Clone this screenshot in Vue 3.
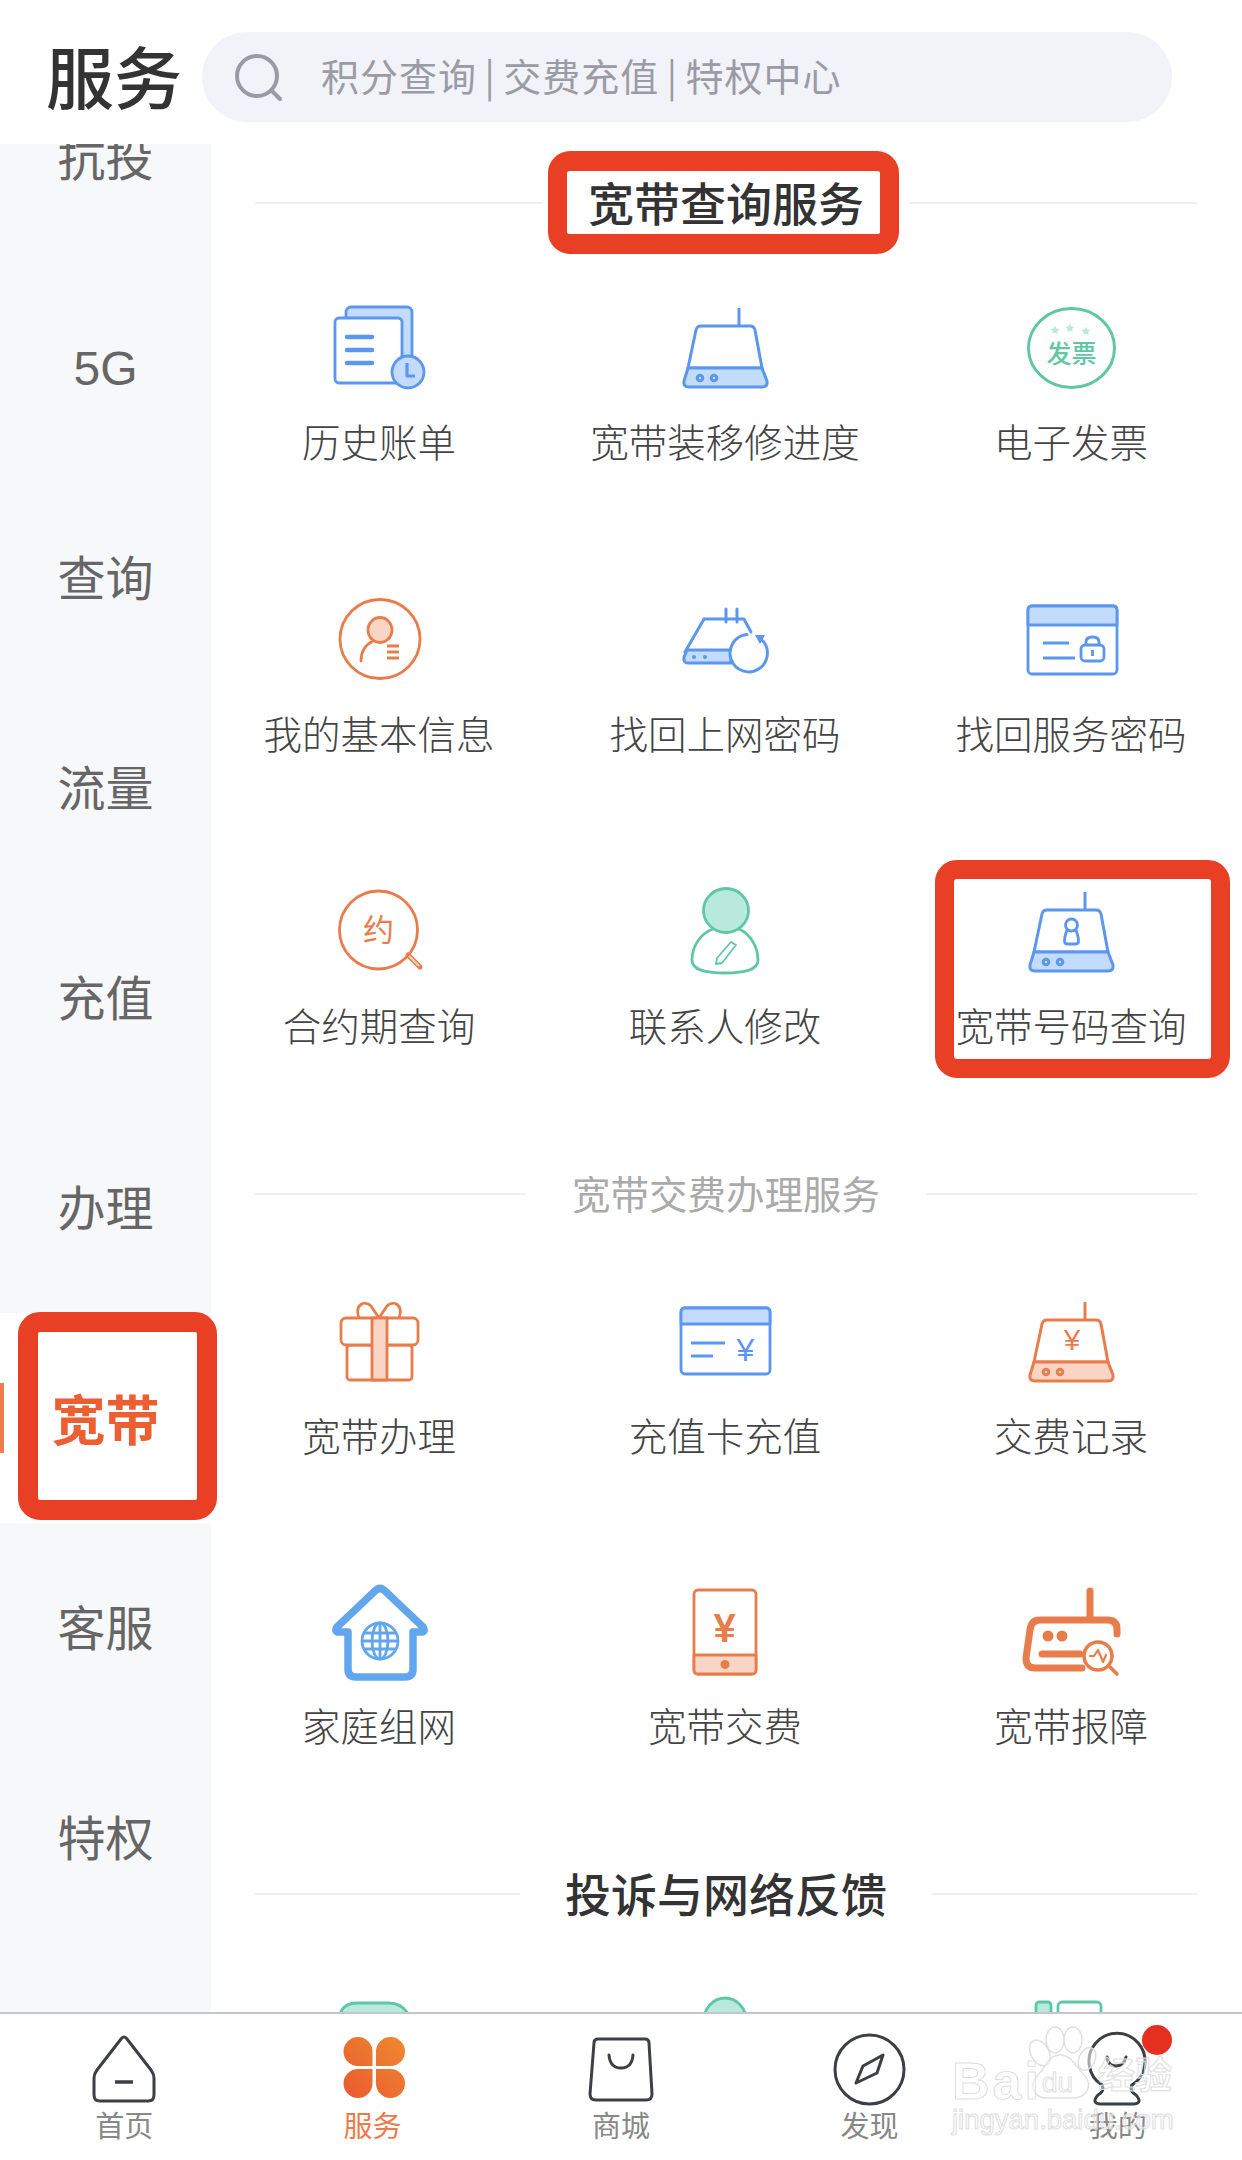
<script setup>
const B = '#5b96ef', BL = '#c3dcfb', O = '#e97c4b', OL = '#f8d5c5', G = '#5fc7a4', GL = '#b9e9da'
const router = (c, l, inner = '') => `<g fill="none" stroke="${c}" stroke-width="3" stroke-linejoin="round"><path d="M64 10V28"/><path d="M26 28H75Q79 28 80 32L87 70H13L21 32Q22 28 26 28Z" fill="#fff"/><path d="M13 70H87L92 83Q93 89 87 89H14Q8 89 9 83Z" fill="${l}"/><circle cx="25" cy="80" r="2.800"/><circle cx="39" cy="80" r="2.800"/></g>${inner}`
const star = (x, y) => `<path transform="translate(${x} ${y}) scale(.62)" d="M0 -7l2.200 4.600 5 .6-3.700 3.400 1 5-4.500-2.500-4.500 2.500 1-5-3.700-3.400 5-.6z"/>`
const icons = {
  bill: `<g stroke="${B}" stroke-width="2.800" stroke-linejoin="round"><rect x="17" y="9" width="66" height="72" rx="5" fill="${BL}"/><rect x="6" y="20" width="67" height="65" rx="4" fill="#fff"/><path d="M18 39H43M18 52H43M18 65H43" stroke-width="4.500" stroke-linecap="round"/><circle cx="79" cy="74" r="16" fill="${BL}"/><path d="M78 65V78H86" fill="none" stroke-width="3.200"/></g>`,
  router: router(B, BL),
  invoice: `<ellipse cx="50.500" cy="50" rx="43" ry="39.500" fill="#fff" stroke="${G}" stroke-width="3"/><text x="50.500" y="65" text-anchor="middle" font-family="Noto Sans CJK SC" font-size="25" font-weight="500" fill="${G}">发票</text><g fill="${GL}">${star(34, 32)}${star(49, 30)}${star(65, 33)}</g>`,
  person: `<g fill="none" stroke="${O}" stroke-width="2.800"><ellipse cx="51" cy="49" rx="40" ry="39.500"/><ellipse cx="51" cy="40" rx="12" ry="12.500" fill="${OL}"/><path d="M32 71C32 62 36 55 44 51" stroke-linecap="round"/><path d="M58 56H70M58 62H70M58 68H70"/></g>`,
  reset: `<g fill="none" stroke="${B}" stroke-width="3" stroke-linejoin="round" stroke-linecap="round"><path d="M51 19V32M62 19V32"/><path d="M29 29H69L76 42"/><path d="M29 29L10 62"/><path d="M14 60H56V73H13Q8 73 9 67L12 60Z" fill="${BL}"/><path d="M72 44.500A18.700 18.700 0 1 0 86 49" fill="#fff"/></g><circle cx="19" cy="67" r="2" fill="${B}"/><circle cx="30" cy="67" r="2" fill="${B}"/><path d="M80 45L90 45L85 54Z" fill="${B}"/>`,
  lock: `<g fill="none" stroke="${B}" stroke-width="2.800" stroke-linejoin="round"><rect x="7" y="16" width="89" height="68" rx="4" fill="#fff"/><path d="M7 35V20Q7 16 11 16H92Q96 16 96 20V35Z" fill="${BL}"/><path d="M22 53H48M22 68H54" stroke-width="3"/><rect x="60" y="55" width="23" height="16" rx="4"/><path d="M65 55V52Q65 47 71.500 47T78 52V55"/><path d="M71.500 60V66"/></g>`,
  contract: `<g fill="none" stroke="${O}"><circle cx="49.500" cy="48" r="39" stroke-width="2.800"/><path d="M79 73L91 85" stroke-width="5" stroke-linecap="round"/><path d="M80 74L90 84" stroke="${OL}" stroke-width="2"/></g><text x="49.500" y="59" text-anchor="middle" font-family="Noto Sans CJK SC" font-size="31" fill="${O}">约</text>`,
  contact: `<g stroke="${G}" stroke-width="2.800"><path d="M38 47C24 52 17 66 17 78C17 88 30 91 50 91C70 91 83 88 83 78C83 66 76 52 64 47" fill="#fff"/><ellipse cx="51" cy="28.500" rx="22.500" ry="22" fill="${GL}"/><path d="M56 60L61 63L47 81L41 82L42 76Z" fill="#fff" stroke-width="1.800" stroke-linejoin="round"/></g>`,
  number: router(B, BL, `<g fill="none" stroke="${B}" stroke-width="2.800"><circle cx="50.500" cy="43" r="6"/><path d="M46 48Q41 62 46 62H55Q60 62 55 48"/></g>`),
  gift: `<g fill="none" stroke="${O}" stroke-width="2.800" stroke-linejoin="round"><path d="M30 26C25 12 36 8 42 14L50 26L58 14C64 8 75 12 70 26"/><rect x="18" y="53" width="65" height="35" rx="3" fill="#fff"/><rect x="12" y="26" width="77" height="27" rx="5" fill="#fff"/><path d="M43 26H58V88H43Z" fill="${OL}"/></g>`,
  card: `<g fill="none" stroke="${B}" stroke-width="2.800" stroke-linejoin="round"><rect x="6" y="16" width="89" height="66" rx="4" fill="#fff"/><path d="M6 32V20Q6 16 10 16H91Q95 16 95 20V32Z" fill="${BL}"/><path d="M16 51H50M16 64H38" stroke-width="3"/></g><text x="70.500" y="69" text-anchor="middle" font-family="Liberation Sans" font-size="32" fill="${B}">¥</text>`,
  bills: router(O, OL, `<text x="51" y="58" text-anchor="middle" font-family="Liberation Sans" font-size="29" fill="${O}">¥</text>`),
  home: `<path d="M19 50H10Q5 50 8 45L46 9Q51 4 56 9L94 45Q97 50 92 50H84V87Q84 95 76 95H27Q19 95 19 87Z" fill="#fff" stroke="#62a6ee" stroke-width="7.500" stroke-linejoin="round"/><g fill="none" stroke="#62a6ee" stroke-width="2.800"><circle cx="51" cy="59" r="18"/><ellipse cx="51" cy="59" rx="8" ry="18"/><path d="M51 41V77M35 51H67M33 59H69M35 67H67"/></g>`,
  pay: `<g fill="none" stroke="${O}" stroke-width="2.800" stroke-linejoin="round"><rect x="19" y="8" width="62" height="84" rx="4" fill="#fff"/><path d="M19 73H81V88Q81 92 77 92H23Q19 92 19 88Z" fill="${OL}"/></g><circle cx="50" cy="82.500" r="4.500" fill="${O}"/><text x="49.500" y="60" text-anchor="middle" font-family="Liberation Sans" font-weight="700" font-size="40" fill="${O}">¥</text>`,
  fault: `<g fill="none" stroke="${O}" stroke-width="7" stroke-linecap="round" stroke-linejoin="round"><path d="M69 9V37"/><path d="M96 52V47Q96 38 86 38H19Q10 38 9 48L5 76Q5 86 14 86H61"/><path d="M21 72H59"/></g><circle cx="27" cy="54" r="5.500" fill="${O}"/><circle cx="41" cy="54" r="5.500" fill="${O}"/><g fill="none" stroke="${O}" stroke-linecap="round" stroke-linejoin="round"><circle cx="77" cy="74" r="14" stroke-width="3.500"/><path d="M88 84L96 92" stroke-width="3.500"/><path d="M69 74H73L77 68L82 80L85 73" stroke-width="2.200"/></g>`,
  g1: `<path d="M10 102V30Q10 11 28 11H60Q80 11 86 40V102Z" fill="${GL}" stroke="${G}" stroke-width="2.800"/>`,
  g2: `<ellipse cx="50" cy="28" rx="21" ry="22" fill="${GL}" stroke="${G}" stroke-width="2.800"/>`,
  g3: `<rect x="15" y="10" width="15" height="60" rx="3" fill="${GL}" stroke="${G}" stroke-width="2.800"/><rect x="37" y="10" width="43" height="60" rx="4" fill="#fff" stroke="${G}" stroke-width="2.800"/>`
}
const menu = ['抗投', '5G', '查询', '流量', '充值', '办理', '宽带', '客服', '特权']
const sections = [
  { title: '宽带查询服务', type: 'strong first', items: [['bill', '历史账单'], ['router', '宽带装移修进度'], ['invoice', '电子发票'], ['person', '我的基本信息'], ['reset', '找回上网密码'], ['lock', '找回服务密码'], ['contract', '合约期查询'], ['contact', '联系人修改'], ['number', '宽带号码查询']] },
  { title: '宽带交费办理服务', type: 'muted', items: [['gift', '宽带办理'], ['card', '充值卡充值'], ['bills', '交费记录'], ['home', '家庭组网'], ['pay', '宽带交费'], ['fault', '宽带报障']] },
  { title: '投诉与网络反馈', type: 'strong', items: [['g1', ''], ['g2', ''], ['g3', '']] }
]
const tabs = ['首页', '服务', '商城', '发现', '我的']
</script>

<template>
  <div class="page">
    <header class="header">
      <h1 class="title">服务</h1>
      <div class="search">
        <svg class="search-icon" viewBox="0 0 50 50" fill="none" stroke="#9a9aa6" stroke-width="4" stroke-linecap="round">
          <circle cx="23" cy="22" r="20" />
          <path d="M38 37L46 45" />
        </svg>
        <span>积分查询 | 交费充值 | 特权中心</span>
      </div>
    </header>

    <div class="body">
      <nav class="side">
        <div v-for="m in menu" :key="m" class="side-item" :class="{ active: m === '宽带', latin: m === '5G' }">{{ m }}</div>
      </nav>
      <main class="main">
        <section v-for="s in sections" :key="s.title" class="section" :class="s.type">
          <div class="sec-head"><i></i><h2>{{ s.title }}</h2><i></i></div>
          <div class="grid">
            <div v-for="it in s.items" :key="it[0]" class="cell">
              <svg class="cell-icon" viewBox="0 0 100 100" v-html="icons[it[0]]"></svg>
              <span v-if="it[1]" class="cell-label">{{ it[1] }}</span>
            </div>
          </div>
        </section>
      </main>
    </div>

    <footer class="tabbar">
      <div v-for="(t, i) in tabs" :key="t" class="tab" :class="{ on: i === 1 }">
        <svg v-if="i === 0" viewBox="0 0 80 80" fill="none" stroke="#3c3f45" stroke-width="3" stroke-linejoin="round">
          <path d="M37 10Q40 6 43 10L67 41Q70 45 70 49V66Q70 72 64 72H16Q10 72 10 66V49Q10 45 13 41Z" />
          <path d="M31 53H49" stroke-width="3.500" />
        </svg>
        <svg v-else-if="i === 1" viewBox="0 0 80 80">
          <defs>
            <linearGradient id="clover" x1="0" y1="1" x2="1" y2="0">
              <stop offset="0" stop-color="#e9592f" />
              <stop offset="1" stop-color="#ef8a30" />
            </linearGradient>
          </defs>
          <path fill="url(#clover)" d="M25 8A14.500 14.500 0 0 1 39.500 22.500V37H25A14.500 14.500 0 0 1 25 8ZM43 37V22.500A14.500 14.500 0 0 1 72 22.500A14.500 14.500 0 0 1 57.500 37ZM39.500 40V54.500A14.500 14.500 0 0 1 10.500 54.500A14.500 14.500 0 0 1 25 40ZM43 40H57.500A14.500 14.500 0 0 1 57.500 69A14.500 14.500 0 0 1 43 54.500Z" />
        </svg>
        <svg v-else-if="i === 2" viewBox="0 0 80 80" fill="none" stroke="#3c3f45" stroke-width="3" stroke-linecap="round" stroke-linejoin="round">
          <path d="M17 10H64Q68 10 68 14L71 65Q71 71 65 71H15Q9 71 9 65L13 14Q13 10 17 10Z" />
          <path d="M28 26Q29 39 40 39Q51 39 52 26" />
        </svg>
        <svg v-else-if="i === 3" viewBox="0 0 80 80" fill="none" stroke="#3c3f45" stroke-width="3" stroke-linejoin="round">
          <circle cx="40.500" cy="40.500" r="34.500" />
          <path d="M54 26L48 44L27 54L34 37Z" />
        </svg>
        <svg v-else viewBox="0 0 80 80" fill="none" stroke="#3c3f45" stroke-width="3" stroke-linecap="round" stroke-linejoin="round">
          <path d="M24 56A28 28 0 1 1 54 56" />
          <path d="M24 56Q27 62 20 66Q13 74 22 75H56Q65 74 58 66Q51 62 54 56" />
          <path d="M29 28Q30 37 38 37Q46 37 48 28" />
        </svg>
        <span class="tab-label">{{ t }}</span>
      </div>
    </footer>

    <div class="mark mark-section"></div>
    <div class="mark mark-side"></div>
    <div class="mark mark-cell"></div>
    <div class="dot"></div>

    <div class="watermark" aria-hidden="true">
      <svg class="paw" viewBox="0 0 235 115" fill="rgba(255,255,255,.55)" stroke="#e0e0e0" stroke-width="1.500">
        <ellipse cx="90" cy="28" rx="9" ry="14" transform="rotate(-30 90 28)" />
        <ellipse cx="105" cy="15" rx="9" ry="13" />
        <ellipse cx="123" cy="15" rx="9" ry="13" />
        <ellipse cx="137" cy="34" rx="8" ry="12" transform="rotate(25 137 34)" />
        <path d="M110 30C122 30 126 42 134 50C144 60 136 74 122 73H98C84 74 78 60 88 50C96 42 98 30 110 30Z" />
      </svg>
      <span class="wm-bai">Bai</span>
      <span class="wm-du">du</span>
      <span class="wm-cn">经验</span>
      <span class="wm-url">jingyan.baidu.com</span>
    </div>
  </div>
</template>

<style scoped>
.page {
  position: relative;
  width: 1242px;
  height: 2160px;
  overflow: hidden;
  background: #fff;
  display: flex;
  flex-direction: column;
  font-family: "Noto Sans CJK SC", "Noto Sans", sans-serif;
  color: #444;
}
.header {
  height: 144px;
  flex: none;
  display: flex;
  align-items: center;
  padding: 10px 0 0 46px;
  box-sizing: border-box;
}
.title {
  margin: 0;
  font-size: 68px;
  line-height: 1;
  font-weight: 500;
  color: #333;
  width: 156px;
  flex: none;
  padding-bottom: 4px;
}
.search {
  width: 970px;
  height: 90px;
  border-radius: 45px;
  background: #f2f3f8;
  display: flex;
  align-items: center;
  padding-left: 32px;
  box-sizing: border-box;
  color: #9b9ba6;
  font-size: 38px;
  white-space: nowrap;
}
.search span {
  margin-left: 37px;
  padding-bottom: 5px;
  word-spacing: -2px;
  letter-spacing: 1px;
}
.search-icon {
  width: 50px;
  height: 50px;
  flex: none;
  margin-top: 4px;
}
.body {
  height: 1868px;
  flex: none;
  display: flex;
  overflow: hidden;
}
.side {
  width: 211px;
  flex: none;
  background: #f7f8fa;
  overflow: hidden;
}
.side-item {
  height: 210px;
  display: flex;
  align-items: center;
  justify-content: center;
  box-sizing: border-box;
  padding-bottom: 7px;
  font-family: "Liberation Sans", "Noto Sans CJK SC", sans-serif;
  font-size: 48px;
  color: #666;
}
.side-item.latin {
  padding-bottom: 0;
}
.side-item:first-child {
  margin-top: -91px;
}
.side-item.active {
  position: relative;
  background: #fff;
  color: #ec5f33;
  font-weight: 700;
  font-size: 54px;
  padding-bottom: 2px;
}
.side-item.active::before {
  content: "";
  position: absolute;
  left: 0;
  top: 70px;
  width: 4px;
  height: 70px;
  background: #ee7c4f;
}
.main {
  flex: 1;
  min-width: 0;
}
.section {
  margin-bottom: 84px;
}
.sec-head {
  height: 118px;
  display: flex;
  align-items: center;
  padding: 0 45px 0 44px;
}
.sec-head i {
  flex: 1;
  height: 2px;
  background: #eff0f2;
}
.sec-head h2 {
  margin: 0;
  font-weight: 500;
  font-size: 46px;
  color: #333;
  padding: 0 45px 5px;
  white-space: nowrap;
}
.muted .sec-head h2 {
  font-weight: 400;
  font-size: 38.500px;
  color: #aaa;
  padding: 0 46px 5px;
}
.grid {
  margin: 39px -2px 0 -5px;
  display: grid;
  grid-template-columns: repeat(3, 346px);
  row-gap: 121px;
}
.first .grid {
  margin-top: 36px;
  row-gap: 123px;
}
.cell {
  display: flex;
  flex-direction: column;
  align-items: center;
}
.cell-icon {
  width: 100px;
  height: 100px;
  flex: none;
}
.cell-label {
  margin-top: 15px;
  height: 54px;
  line-height: 54px;
  font-size: 38.500px;
  font-weight: 300;
  color: #444;
  white-space: nowrap;
}
.tabbar {
  flex: 1;
  display: grid;
  grid-template-columns: repeat(5, 1fr);
  border-top: 2px solid #c4c6cb;
  padding-top: 15px;
}
.tab {
  display: flex;
  flex-direction: column;
  align-items: center;
}
.tab svg {
  width: 80px;
  height: 80px;
  flex: none;
}
.tab-label {
  font-size: 29px;
  line-height: 36px;
  margin-top: -3px;
  color: #888;
}
.tab.on .tab-label {
  color: #ec7b4c;
}
.mark {
  position: absolute;
  box-sizing: border-box;
  border: 19px solid #e94025;
  border-radius: 22px;
}
.mark-section {
  left: 548px;
  top: 151px;
  width: 351px;
  height: 103px;
  border-width: 20px 19px;
}
.mark-side {
  left: 18px;
  top: 1312px;
  width: 199px;
  height: 208px;
  border-width: 20px;
}
.mark-cell {
  left: 935px;
  top: 860px;
  width: 295px;
  height: 218px;
}
.dot {
  position: absolute;
  left: 1142px;
  top: 2025px;
  width: 30px;
  height: 30px;
  border-radius: 50%;
  background: #e5301f;
}
.watermark {
  position: absolute;
  left: 950px;
  top: 2025px;
  width: 235px;
  height: 115px;
  color: rgba(255, 255, 255, 0.45);
  -webkit-text-stroke: 1px #dedede;
  font-family: "Liberation Sans", sans-serif;
  line-height: 1;
  white-space: nowrap;
}
.watermark span {
  position: absolute;
}
.paw {
  position: absolute;
  left: 0;
  top: 0;
  width: 235px;
  height: 115px;
}
.wm-bai {
  left: 2px;
  top: 30px;
  font-size: 52px;
  font-weight: 700;
  letter-spacing: 3px;
}
.wm-du {
  left: 92px;
  top: 44px;
  font-size: 28px;
}
.wm-cn {
  left: 148px;
  top: 30px;
  font-size: 37px;
  font-family: "Noto Sans CJK SC", sans-serif;
  font-weight: 700;
}
.wm-url {
  left: 2px;
  top: 81px;
  font-size: 27.500px;
}
</style>
